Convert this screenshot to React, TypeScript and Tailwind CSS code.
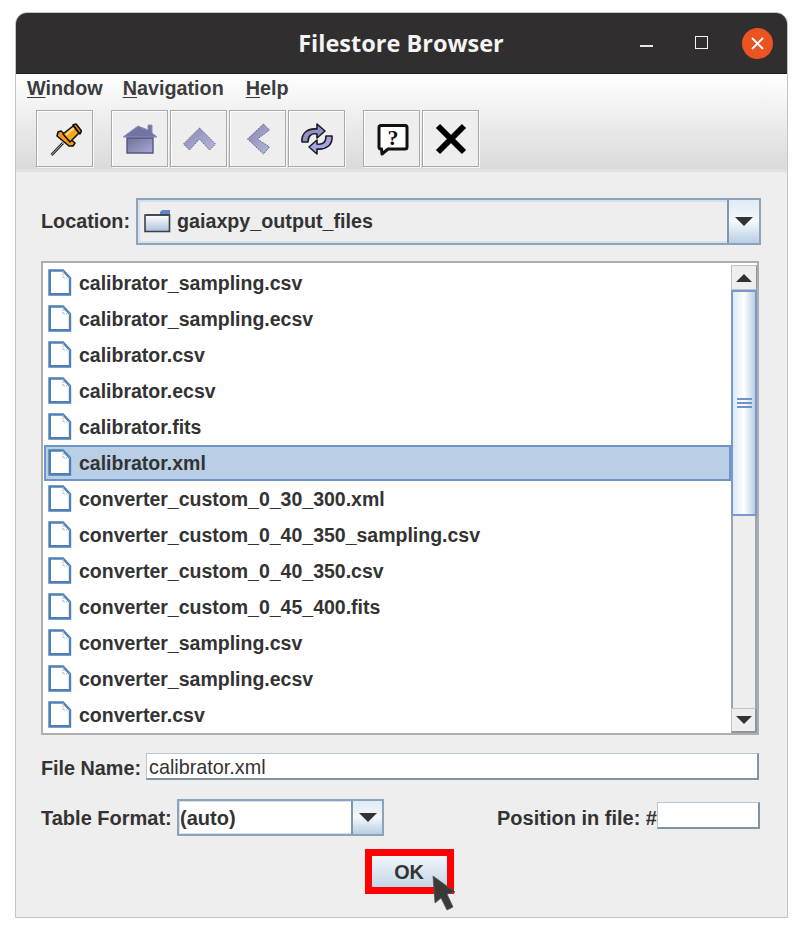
const files = [
  'calibrator_sampling.csv',
  'calibrator_sampling.ecsv',
  'calibrator.csv',
  'calibrator.ecsv',
  'calibrator.fits',
  'calibrator.xml',
  'converter_custom_0_30_300.xml',
  'converter_custom_0_40_350_sampling.csv',
  'converter_custom_0_40_350.csv',
  'converter_custom_0_45_400.fits',
  'converter_sampling.csv',
  'converter_sampling.ecsv',
  'converter.csv',
];

function FileIcon() {
  return (
    <svg width="24" height="27" viewBox="0 0 24 27" className="mb-[2px] shrink-0">
      <path d="M1.5 1.5H15L22 9V25.5H1.5Z" fill="#fff" stroke="#4f80b3" strokeWidth="2.4" />
      <path d="M1 26H23V24H3V1H1Z" fill="#4f80b3" />
      <path d="M15 2V9H22" fill="none" stroke="#9db7d4" strokeWidth="1.2" strokeDasharray="1.5 1" />
    </svg>
  );
}

function FolderIcon() {
  return (
    <svg width="27" height="23" viewBox="0 0 27 23" className="shrink-0">
      <defs>
        <linearGradient id="folderFill" x1="0" y1="0" x2="0" y2="1">
          <stop offset="0" stopColor="#ffffff" />
          <stop offset="1" stopColor="#a9c1de" />
        </linearGradient>
      </defs>
      <path d="M16 2L18 0H26V5H16Z" fill="#5c86c4" />
      <path d="M1 5H25.5V21.5H1Z" fill="url(#folderFill)" stroke="#3c3f44" strokeWidth="1.6" />
      <path d="M2 5H25" stroke="#3c3f44" strokeWidth="1.4" />
    </svg>
  );
}

function PinIcon() {
  return (
    <svg width="34" height="34" viewBox="0 0 34 34">
      <path d="M3.500 33L15 21" stroke="#222" strokeWidth="2.600" />
      <path d="M3.500 33L15 21" stroke="#bbb" strokeWidth="1" />
      <path d="M10 10L13 9L27 21L25 24L21 24L9 14Z" fill="#f49a16" stroke="#111" strokeWidth="1.600" strokeLinejoin="round" />
      <path d="M15 12L25 4L31 11L22 20Z" fill="#f7a823" stroke="#111" strokeWidth="1.600" strokeLinejoin="round" />
      <path d="M25 3L28 2L33.500 9L32 12Z" fill="#e98c0c" stroke="#111" strokeWidth="1.600" strokeLinejoin="round" />
      <path d="M18 13L26 6" stroke="#ffd98a" strokeWidth="1.800" />
    </svg>
  );
}

function HomeIcon() {
  return (
    <svg width="36" height="30" viewBox="0 0 36 30">
      <defs>
        <linearGradient id="homeFill" x1="0" y1="0" x2="1" y2="1">
          <stop offset="0" stopColor="#6e7099" />
          <stop offset="1" stopColor="#a9abd6" />
        </linearGradient>
      </defs>
      <path d="M1 13L16 2L26 6V1H30V9L35 13Z" fill="#7173a3" stroke="#8e90ba" strokeWidth="1" />
      <path d="M5 14H31V29H5Z" fill="url(#homeFill)" stroke="#555780" strokeWidth="1.400" />
    </svg>
  );
}

function UpIcon() {
  return (
    <svg width="34" height="26" viewBox="0 0 34 26">
      <defs>
        <linearGradient id="upFill" x1="0" y1="0" x2="1" y2="1">
          <stop offset="0" stopColor="#8688b4" />
          <stop offset="1" stopColor="#b4b6dc" />
        </linearGradient>
      </defs>
      <path d="M17.500 2L1.500 18L7.500 24L17.500 13L27.500 24L33.500 18Z" fill="url(#upFill)" stroke="#6c6e7c" strokeWidth="1" strokeDasharray="2 1" />
    </svg>
  );
}

function LeftIcon() {
  return (
    <svg width="26" height="34" viewBox="0 0 26 34">
      <defs>
        <linearGradient id="leftFill" x1="0" y1="0" x2="1" y2="1">
          <stop offset="0" stopColor="#8688b4" />
          <stop offset="1" stopColor="#b4b6dc" />
        </linearGradient>
      </defs>
      <path d="M18.500 2L2.500 17L18.500 32L24.500 25L12.500 17L24.500 8Z" fill="url(#leftFill)" stroke="#6c6e7c" strokeWidth="1" strokeDasharray="2 1" />
    </svg>
  );
}

function RefreshIcon() {
  return (
    <svg width="36" height="36" viewBox="0 0 36 36">
      <path d="M3 21C2 12 9 7 18 8V3L26 10L18 17V13C12 12 9 15 9 21Z" fill="#8f91c8" stroke="#1c1c24" strokeWidth="1.600" strokeLinejoin="round" />
      <path d="M33 15C34 24 27 29 18 28V33L10 26L18 19V23C24 24 27 21 27 15Z" fill="#a3a5de" stroke="#1c1c24" strokeWidth="1.600" strokeLinejoin="round" />
    </svg>
  );
}

function HelpIcon() {
  return (
    <svg width="34" height="34" viewBox="0 0 34 34">
      <path d="M6 3.500H30Q32 3.500 32 5.500V25Q32 27 30 27H13L7 32L6.500 27H6Q4 27 4 25V5.500Q4 3.500 6 3.500Z" fill="#fff" stroke="#111" strokeWidth="3" strokeLinejoin="round" />
      <text x="18" y="22.500" textAnchor="middle" fontFamily="Liberation Serif, serif" fontWeight="700" fontSize="22" fill="#111">?</text>
    </svg>
  );
}

function CloseIcon() {
  return (
    <svg width="32" height="32" viewBox="0 0 32 32">
      <path d="M3 3L29 29M29 3L3 29" stroke="#000" strokeWidth="6" />
    </svg>
  );
}

function ToolButton({ children }: { children: React.ReactNode }) {
  return (
    <button className="flex h-[57px] w-[57px] items-center justify-center border border-[#a9a9a9] bg-[#eeeeee] shadow-[1px_1px_0_#f7f7f7,inset_1px_1px_0_#ffffff]">
      {children}
    </button>
  );
}

function ComboArrow({ width }: { width: string }) {
  return (
    <div className={`flex shrink-0 items-center justify-center self-stretch border-l-2 border-[#7f99ac] bg-gradient-to-b from-[#dfebf5] via-[#f3f8fb] to-[#b8cfe5] ${width}`}>
      <div className="h-0 w-0 border-x-[9px] border-t-[9px] border-x-transparent border-t-[#333333]" />
    </div>
  );
}

export default function App() {
  return (
    <div className="h-[933px] w-[800px] overflow-hidden bg-white pl-[15px] pt-[12px] font-['Liberation_Sans',sans-serif] text-[19.8px] font-bold text-[#333333]">
      <div className="flex h-[906px] w-[773px] flex-col overflow-hidden rounded-t-[12px] border border-[#c4c4c4] bg-[#eeeeee]">
        <div className="grid h-[61px] shrink-0 grid-cols-[1fr_auto_1fr] items-center border-b border-[#1f1f1f] bg-[#302e2e]">
          <div />
          <div className="pr-px pt-[2px] font-['Open_Sans',sans-serif] text-[23.5px] font-bold text-[#f4f4f4]">Filestore Browser</div>
          <div className="flex items-center justify-end pr-[14px]">
            <div className="mr-[42px] mt-[6px] h-[2px] w-[13px] bg-[#e8e8e8]" />
            <div className="mr-[34px] mt-[-2px] h-[13px] w-[13px] border-[1.5px] border-[#f4f4f4]" />
            <div className="flex h-[31px] w-[31px] items-center justify-center rounded-full bg-[#e95420]">
              <svg width="15" height="15" viewBox="0 0 15 15">
                <path d="M2 2L13 13M13 2L2 13" stroke="#fff" strokeWidth="1.800" />
              </svg>
            </div>
          </div>
        </div>

        <div className="h-[95px] shrink-0 bg-gradient-to-b from-white to-[#dadada]">
          <div className="flex h-[30px] items-center gap-[20px] pl-[11px] text-[#3c3c3c]">
            <span><span className="underline underline-offset-2">W</span>indow</span>
            <span><span className="underline underline-offset-2">N</span>avigation</span>
            <span className="ml-[2px]"><span className="underline underline-offset-2">H</span>elp</span>
          </div>
          <div className="flex pl-[20px] pt-[6px]">
            <ToolButton><PinIcon /></ToolButton>
            <div className="ml-[18px] flex gap-[2px]">
              <ToolButton><HomeIcon /></ToolButton>
              <ToolButton><UpIcon /></ToolButton>
              <ToolButton><LeftIcon /></ToolButton>
              <ToolButton><RefreshIcon /></ToolButton>
            </div>
            <div className="ml-[18px] flex gap-[2px]">
              <ToolButton><HelpIcon /></ToolButton>
              <ToolButton><CloseIcon /></ToolButton>
            </div>
          </div>
        </div>

        <div className="flex flex-1 flex-col border-t-[3px] border-[#e0e0e0] pl-[25px] pr-[26px] pt-[26px]">
          <div className="flex h-[47px] items-center">
            <span className="w-[95px] shrink-0">Location:</span>
            <div className="flex h-full w-[625px] border-2 border-[#8ba4ba] bg-[#eeeeee] text-[19.7px] shadow-[inset_0_0_0_2px_#d4e1ec]">
              <div className="flex flex-1 items-center gap-[6px] pl-[6px]">
                <FolderIcon />
                <span>gaiaxpy_output_files</span>
              </div>
              <ComboArrow width="w-[32px]" />
            </div>
          </div>

          <div className="mt-[16px] flex h-[474px] w-[718px] border-2 border-[#adadad] bg-white text-[19.5px]">
            <div className="min-w-0 flex-1 overflow-hidden pl-px pt-[2px]">
              {files.map((name) =>
                name === 'calibrator.xml' ? (
                  <div key={name} className="flex h-[36px] items-center gap-[7px] border-2 border-[#7093c9] bg-[#b8cfe5] pl-[2px]">
                    <FileIcon />
                    <span className="pt-[2px]">{name}</span>
                  </div>
                ) : (
                  <div key={name} className="flex h-[36px] items-center gap-[7px] pl-[4px]">
                    <FileIcon />
                    <span className="pt-[2px]">{name}</span>
                  </div>
                ),
              )}
            </div>
            <div className="flex w-[26px] shrink-0 flex-col pt-[2px]">
              <div className="flex h-[25px] items-center justify-center border border-[#c2c2c2] border-r-[#8a979f] bg-[#eeeeee]">
                <div className="h-0 w-0 border-x-[8px] border-b-[8px] border-x-transparent border-b-[#333333]" />
              </div>
              <div className="flex h-[226px] flex-col items-center justify-center border-2 border-[#7c97cd] bg-gradient-to-r from-[#dceaf5] via-white to-[#b8cfe5]">
                <div className="flex w-[15px] flex-col gap-[2px]">
                  <div className="h-[2px] bg-[#7093c9]" />
                  <div className="h-[2px] bg-[#7093c9]" />
                  <div className="h-[2px] bg-[#7093c9]" />
                </div>
              </div>
              <div className="flex-1 border-x-2 border-x-[#9aa6ad] bg-[#eeeeee]" />
              <div className="flex h-[25px] items-center justify-center border border-[#c2c2c2] border-b-2 border-r-2 border-b-[#8a979f] border-r-[#8a979f] bg-[#eeeeee]">
                <div className="h-0 w-0 border-x-[8px] border-t-[8px] border-x-transparent border-t-[#333333]" />
              </div>
            </div>
          </div>

          <div className="mt-[18px] flex h-[27px] items-center">
            <span className="w-[105px] shrink-0 pt-[4px]">File Name:</span>
            <div className="flex h-full w-[613px] items-center border border-[#b9c6d1] border-b-2 border-r-2 border-b-[#8094a5] border-r-[#8094a5] bg-white pl-[2px] pt-[4px] font-normal">
              calibrator.xml
            </div>
          </div>

          <div className="mt-[19px] flex h-[37px] items-center text-[20px]">
            <span className="w-[136px] shrink-0">Table Format:</span>
            <div className="flex h-full w-[207px] border-2 border-[#8ba4ba] bg-white shadow-[inset_0_0_0_1px_#d4e1ec]">
              <div className="flex flex-1 items-center pl-[1px]">(auto)</div>
              <ComboArrow width="w-[31px]" />
            </div>
            <span className="ml-auto">Position in file: #</span>
            <div className="mb-[5px] mr-px h-[27px] w-[103px] border border-[#b9c6d1] border-b-2 border-r-2 border-b-[#8094a5] border-r-[#8094a5] bg-white" />
          </div>

          <div className="relative mt-[13px] flex justify-center pl-[16px]">
            <button className="relative h-[45px] w-[89px] border-[7px] border-[#ff0000] bg-gradient-to-b from-[#f1f6fa] to-[#c3d6e8] pt-[2px] text-[#333333]">
              OK
              <svg width="26" height="36" viewBox="0 0 26 36" className="absolute left-[60px] top-[20px]">
                <path d="M1 0L23 16L15 18L21 31L15 34L9 22L3 27Z" fill="#3a3a3a" stroke="#555" strokeWidth="0.8" />
              </svg>
            </button>
          </div>
        </div>
      </div>
    </div>
  );
}
